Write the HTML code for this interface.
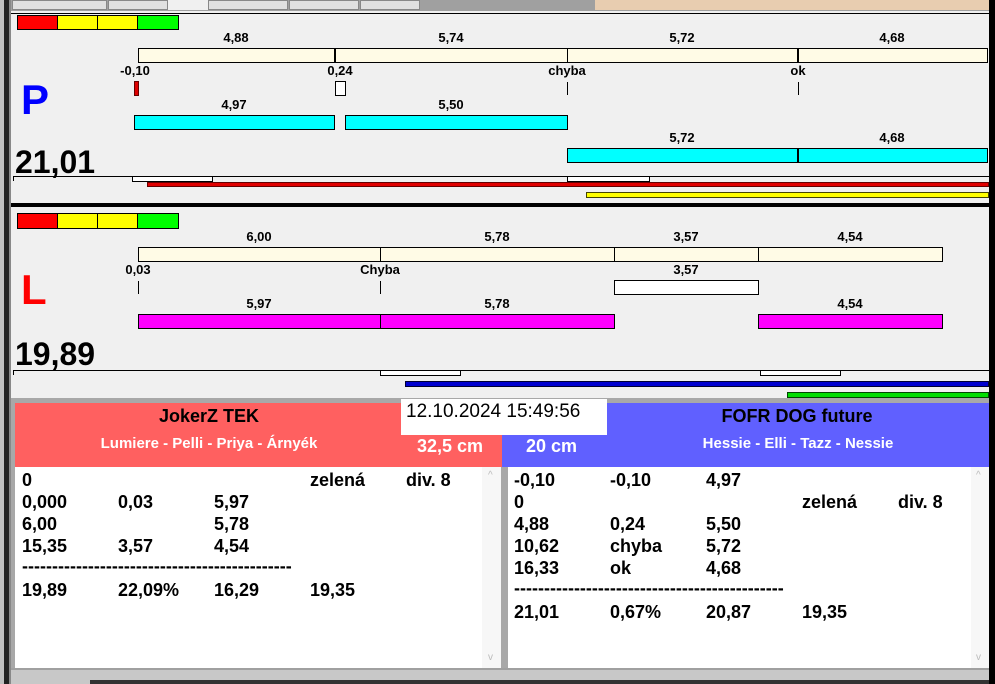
<!DOCTYPE html>
<html><head><meta charset="utf-8"><style>
*{margin:0;padding:0;box-sizing:border-box}
body{width:995px;height:684px;background:#f0f0f0;position:relative;overflow:hidden;font-family:"Liberation Sans",Arial,sans-serif}
div{position:absolute}
.l{font-weight:bold;font-size:13px;color:#000;transform:translateX(-50%);white-space:nowrap;line-height:14px}
.cr{background:#fffbe6;border:1px solid #000}
.cy{background:#00ffff;border:1px solid #000}
.mg{background:#ff00ff;border:1px solid #000}
.t{font-weight:bold;font-size:18px;line-height:22px;white-space:nowrap}
.w{background:#fff;border:1px solid #000}
</style></head><body>
<!-- tabs -->
<div style="left:0;top:0;width:995px;height:11px;background:#a0a0a0"></div>
<div style="left:595px;top:0;width:394px;height:10px;background:#e8cdb0"></div>
<div style="left:12px;top:0;width:95px;height:10px;background:#e0e0e0;border:1px solid #888"></div>
<div style="left:108px;top:0;width:60px;height:10px;background:#e0e0e0;border:1px solid #888"></div>
<div style="left:168px;top:0;width:40px;height:10px;background:#f0f0f0"></div>
<div style="left:208px;top:0;width:80px;height:10px;background:#e0e0e0;border:1px solid #888"></div>
<div style="left:289px;top:0;width:70px;height:10px;background:#e0e0e0;border:1px solid #888"></div>
<div style="left:360px;top:0;width:60px;height:10px;background:#e0e0e0;border:1px solid #888"></div>
<div style="left:0;top:0;width:4px;height:684px;background:#c0c0c0"></div>
<div style="left:4px;top:0;width:5px;height:684px;background:#222"></div>
<div style="left:9px;top:0;width:2px;height:684px;background:#888"></div>
<div style="left:989px;top:0;width:6px;height:684px;background:#000"></div>
<div style="left:11px;top:13px;width:978px;height:1px;background:#000"></div>

<!-- panel P -->
<div style="left:17px;top:15px;width:41px;height:15px;background:#f00;border:1px solid #000"></div>
<div style="left:57px;top:15px;width:41px;height:15px;background:#ff0;border:1px solid #000"></div>
<div style="left:97px;top:15px;width:41px;height:15px;background:#ff0;border:1px solid #000"></div>
<div style="left:137px;top:15px;width:42px;height:15px;background:#0f0;border:1px solid #000"></div>
<div class="l" style="left:236px;top:31px">4,88</div>
<div class="l" style="left:451px;top:31px">5,74</div>
<div class="l" style="left:682px;top:31px">5,72</div>
<div class="l" style="left:892px;top:31px">4,68</div>
<div class="cr" style="left:138px;top:48px;width:850px;height:15px"></div>
<div style="left:334px;top:48px;width:2px;height:15px;background:#000"></div>
<div style="left:567px;top:48px;width:1px;height:15px;background:#000"></div>
<div style="left:797px;top:48px;width:2px;height:15px;background:#000"></div>
<div class="l" style="left:135px;top:64px">-0,10</div>
<div class="l" style="left:340px;top:64px">0,24</div>
<div class="l" style="left:567px;top:64px">chyba</div>
<div class="l" style="left:798px;top:64px">ok</div>
<div style="left:134px;top:81px;width:5px;height:15px;background:#d00;border:1px solid #600"></div>
<div class="w" style="left:335px;top:81px;width:11px;height:15px"></div>
<div style="left:567px;top:82px;width:1px;height:13px;background:#000"></div>
<div style="left:798px;top:82px;width:1px;height:13px;background:#000"></div>
<div style="left:21px;top:76px;font-size:42px;font-weight:bold;color:#0000ff">P</div>
<div class="l" style="left:234px;top:98px">4,97</div>
<div class="l" style="left:451px;top:98px">5,50</div>
<div class="cy" style="left:134px;top:115px;width:201px;height:15px"></div>
<div class="cy" style="left:345px;top:115px;width:223px;height:15px"></div>
<div class="l" style="left:682px;top:131px">5,72</div>
<div class="l" style="left:892px;top:131px">4,68</div>
<div class="cy" style="left:567px;top:148px;width:421px;height:15px"></div>
<div style="left:797px;top:148px;width:2px;height:15px;background:#000"></div>
<div style="left:15px;top:144px;font-size:32px;font-weight:bold;color:#000;letter-spacing:0">21,01</div>
<div style="left:13px;top:176px;width:976px;height:1px;background:#000"></div>
<div style="left:13px;top:176px;width:1px;height:5px;background:#000"></div>
<div class="w" style="left:132px;top:176px;width:81px;height:6px"></div>
<div class="w" style="left:567px;top:176px;width:83px;height:6px"></div>
<div style="left:147px;top:182px;width:842px;height:5px;background:#e00000;border:1px solid #600"></div>
<div style="left:586px;top:192px;width:403px;height:6px;background:#ff0;border:1px solid #440"></div>
<div style="left:11px;top:203px;width:978px;height:4px;background:#000"></div>

<!-- panel L -->
<div style="left:17px;top:213px;width:41px;height:16px;background:#f00;border:1px solid #000"></div>
<div style="left:57px;top:213px;width:41px;height:16px;background:#ff0;border:1px solid #000"></div>
<div style="left:97px;top:213px;width:41px;height:16px;background:#ff0;border:1px solid #000"></div>
<div style="left:137px;top:213px;width:42px;height:16px;background:#0f0;border:1px solid #000"></div>
<div class="l" style="left:259px;top:230px">6,00</div>
<div class="l" style="left:497px;top:230px">5,78</div>
<div class="l" style="left:686px;top:230px">3,57</div>
<div class="l" style="left:850px;top:230px">4,54</div>
<div class="cr" style="left:138px;top:247px;width:805px;height:15px"></div>
<div style="left:380px;top:247px;width:1px;height:15px;background:#000"></div>
<div style="left:614px;top:247px;width:1px;height:15px;background:#000"></div>
<div style="left:758px;top:247px;width:1px;height:15px;background:#000"></div>
<div class="l" style="left:138px;top:263px">0,03</div>
<div class="l" style="left:380px;top:263px">Chyba</div>
<div class="l" style="left:686px;top:263px">3,57</div>
<div style="left:138px;top:281px;width:1px;height:13px;background:#000"></div>
<div style="left:380px;top:281px;width:1px;height:13px;background:#000"></div>
<div class="w" style="left:614px;top:280px;width:145px;height:15px"></div>
<div style="left:21px;top:266px;font-size:42px;font-weight:bold;color:#ff0000">L</div>
<div class="l" style="left:259px;top:297px">5,97</div>
<div class="l" style="left:497px;top:297px">5,78</div>
<div class="l" style="left:850px;top:297px">4,54</div>
<div class="mg" style="left:138px;top:314px;width:477px;height:15px"></div>
<div style="left:380px;top:314px;width:1px;height:15px;background:#000"></div>
<div class="mg" style="left:758px;top:314px;width:185px;height:15px"></div>
<div style="left:15px;top:336px;font-size:32px;font-weight:bold;color:#000;letter-spacing:0">19,89</div>
<div style="left:13px;top:370px;width:976px;height:1px;background:#000"></div>
<div style="left:13px;top:370px;width:1px;height:5px;background:#000"></div>
<div class="w" style="left:380px;top:370px;width:81px;height:6px"></div>
<div class="w" style="left:760px;top:370px;width:81px;height:6px"></div>
<div style="left:405px;top:381px;width:584px;height:6px;background:#0000d0;border:1px solid #003"></div>
<div style="left:787px;top:392px;width:202px;height:6px;background:#00dd00;border:1px solid #040"></div>

<!-- bottom -->
<div style="left:11px;top:398px;width:978px;height:286px;background:#a8a8a8"></div>
<div style="left:15px;top:403px;width:487px;height:64px;background:#ff6060"></div>
<div style="left:502px;top:403px;width:487px;height:64px;background:#6060ff"></div>
<div style="left:401px;top:399px;width:206px;height:36px;background:#fff"></div>
<div style="left:406px;top:401px;font-size:19px;color:#000;white-space:nowrap">12.10.2024 15:49:56</div>
<div class="t" style="left:209px;top:405px;transform:translateX(-50%)">JokerZ TEK</div>
<div class="t" style="left:797px;top:405px;transform:translateX(-50%)">FOFR DOG future</div>
<div style="left:209px;top:435px;transform:translateX(-50%);font-size:15px;font-weight:bold;color:#fff;white-space:nowrap">Lumiere - Pelli - Priya - Árnyék</div>
<div style="left:798px;top:435px;transform:translateX(-50%);font-size:15px;font-weight:bold;color:#fff;white-space:nowrap">Hessie - Elli - Tazz - Nessie</div>
<div style="left:417px;top:436px;font-size:18px;font-weight:bold;color:#fff">32,5 cm</div>
<div style="left:526px;top:436px;font-size:18px;font-weight:bold;color:#fff">20 cm</div>
<div style="left:15px;top:467px;width:486px;height:201px;background:#fff"></div>
<div style="left:482px;top:467px;width:19px;height:201px;background:#f7f7f7"></div>
<div style="left:488px;top:470px;font-size:10px;color:#bbb">^</div>
<div style="left:488px;top:652px;font-size:10px;color:#bbb">v</div>
<div style="left:508px;top:467px;width:481px;height:201px;background:#fff"></div>
<div style="left:971px;top:467px;width:18px;height:201px;background:#f7f7f7"></div>
<div style="left:976px;top:470px;font-size:10px;color:#bbb">^</div>
<div style="left:976px;top:652px;font-size:10px;color:#bbb">v</div>
<div style="left:11px;top:668px;width:978px;height:16px;background:#c8c8c8;border-top:2px solid #a0a0a0"></div>
<div style="left:90px;top:680px;width:899px;height:4px;background:#333"></div>

<div class="t" style="left:22px;top:469px">0</div><div class="t" style="left:310px;top:469px">zelená</div><div class="t" style="left:406px;top:469px">div. 8</div>
<div class="t" style="left:22px;top:491px">0,000</div><div class="t" style="left:118px;top:491px">0,03</div><div class="t" style="left:214px;top:491px">5,97</div>
<div class="t" style="left:22px;top:513px">6,00</div><div class="t" style="left:214px;top:513px">5,78</div>
<div class="t" style="left:22px;top:535px">15,35</div><div class="t" style="left:118px;top:535px">3,57</div><div class="t" style="left:214px;top:535px">4,54</div>
<div class="t" style="left:22px;top:555px;letter-spacing:0">---------------------------------------------</div>
<div class="t" style="left:22px;top:579px">19,89</div><div class="t" style="left:118px;top:579px">22,09%</div><div class="t" style="left:214px;top:579px">16,29</div><div class="t" style="left:310px;top:579px">19,35</div>

<div class="t" style="left:514px;top:469px">-0,10</div><div class="t" style="left:610px;top:469px">-0,10</div><div class="t" style="left:706px;top:469px">4,97</div>
<div class="t" style="left:514px;top:491px">0</div><div class="t" style="left:802px;top:491px">zelená</div><div class="t" style="left:898px;top:491px">div. 8</div>
<div class="t" style="left:514px;top:513px">4,88</div><div class="t" style="left:610px;top:513px">0,24</div><div class="t" style="left:706px;top:513px">5,50</div>
<div class="t" style="left:514px;top:535px">10,62</div><div class="t" style="left:610px;top:535px">chyba</div><div class="t" style="left:706px;top:535px">5,72</div>
<div class="t" style="left:514px;top:557px">16,33</div><div class="t" style="left:610px;top:557px">ok</div><div class="t" style="left:706px;top:557px">4,68</div>
<div class="t" style="left:514px;top:577px;letter-spacing:0">---------------------------------------------</div>
<div class="t" style="left:514px;top:601px">21,01</div><div class="t" style="left:610px;top:601px">0,67%</div><div class="t" style="left:706px;top:601px">20,87</div><div class="t" style="left:802px;top:601px">19,35</div>
</body></html>
